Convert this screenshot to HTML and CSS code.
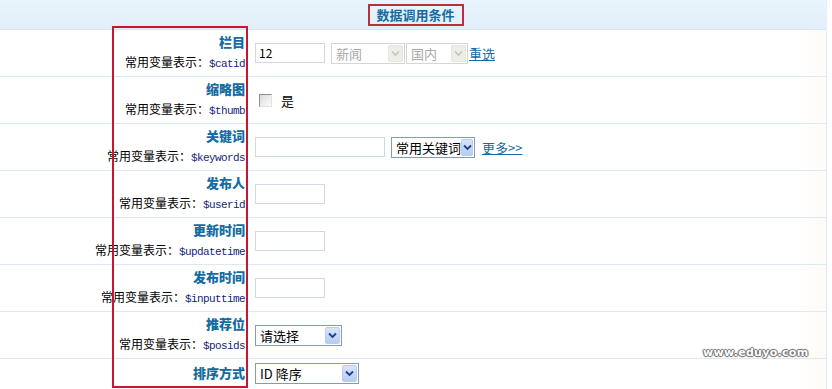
FILE: index.html
```html
<!DOCTYPE html>
<html lang="zh-CN">
<head>
<meta charset="UTF-8">
<title>数据调用条件</title>
<link rel="stylesheet" href="styles.css">
</head>
<body>

<div class="panel">
  <div class="panel-head">
    <span class="head-title">数据调用条件</span>
  </div>

  <div class="row">
    <div class="label"><b>栏目</b><span class="hint">常用变量表示：<code>$catid</code></span></div>
    <div class="value">
      <span class="field w70">12</span>
      <span class="select disabled w74"><span class="txt">新闻</span><span class="arrow"><svg width="9" height="7" viewBox="0 0 9 7"><path d="M1 1.5 L4.5 5 L8 1.5" fill="none" stroke="#c3c3c3" stroke-width="1.6"/></svg></span></span>
      <span class="select disabled w62"><span class="txt">国内</span><span class="arrow"><svg width="9" height="7" viewBox="0 0 9 7"><path d="M1 1.5 L4.5 5 L8 1.5" fill="none" stroke="#c3c3c3" stroke-width="1.6"/></svg></span></span>
      <a href="#" class="link tight">重选</a>
    </div>
  </div>

  <div class="row">
    <div class="label"><b>缩略图</b><span class="hint">常用变量表示：<code>$thumb</code></span></div>
    <div class="value">
      <span class="check"></span><span class="check-text">是</span>
    </div>
  </div>

  <div class="row">
    <div class="label"><b>关键词</b><span class="hint">常用变量表示：<code>$keywords</code></span></div>
    <div class="value">
      <span class="field w130"></span>
      <span class="select w84 gap6"><span class="txt">常用关键词</span><span class="arrow"><svg width="9" height="7" viewBox="0 0 9 7"><path d="M1 1.5 L4.5 5 L8 1.5" fill="none" stroke="#1d3f8c" stroke-width="1.8"/></svg></span></span>
      <a href="#" class="link gap7">更多&gt;&gt;</a>
    </div>
  </div>

  <div class="row">
    <div class="label"><b>发布人</b><span class="hint">常用变量表示：<code>$userid</code></span></div>
    <div class="value"><span class="field w70"></span></div>
  </div>

  <div class="row">
    <div class="label"><b>更新时间</b><span class="hint">常用变量表示：<code>$updatetime</code></span></div>
    <div class="value"><span class="field w70"></span></div>
  </div>

  <div class="row">
    <div class="label"><b>发布时间</b><span class="hint">常用变量表示：<code>$inputtime</code></span></div>
    <div class="value"><span class="field w70"></span></div>
  </div>

  <div class="row">
    <div class="label"><b>推荐位</b><span class="hint">常用变量表示：<code>$posids</code></span></div>
    <div class="value">
      <span class="select w87"><span class="txt">请选择</span><span class="arrow"><svg width="9" height="7" viewBox="0 0 9 7"><path d="M1 1.5 L4.5 5 L8 1.5" fill="none" stroke="#1d3f8c" stroke-width="1.8"/></svg></span></span>
    </div>
  </div>

  <div class="row last">
    <div class="label"><b>排序方式</b></div>
    <div class="value">
      <span class="select w104"><span class="txt">ID 降序</span><span class="arrow"><svg width="9" height="7" viewBox="0 0 9 7"><path d="M1 1.5 L4.5 5 L8 1.5" fill="none" stroke="#1d3f8c" stroke-width="1.8"/></svg></span></span>
    </div>
  </div>

  <div class="mark-box"></div>
  <div class="watermark">www.eduyo.com</div>
</div>

</body>
</html>
```

FILE: styles.css
```css
body, html {
  margin: 0;
  background: #fff;
  font-family: "Noto Sans CJK SC", "Noto Sans", sans-serif;
  font-size: 12px;
  color: #000;
}

.panel {
  position: relative;
  width: 826px;
  height: 389px;
  overflow: hidden;
  border-right: 1px solid #e3eef6;
  background: linear-gradient(to right, #fff 0, #fff 96%, #fdfbf6 100%);
}

.panel-head {
  height: 29px;
  border-bottom: 1px solid #d7e6f0;
  background: linear-gradient(#e9f4fc, #e2eff9);
  display: flex;
  align-items: center;
  justify-content: center;
  padding-left: 6px;
}

.head-title {
  display: inline-block;
  height: 18px;
  line-height: 18px;
  padding: 0 7px 0 6px;
  border: 2px solid #b7303c;
  font-size: 13px;
  font-weight: bold;
  color: #146ca3;
}

.row {
  display: flex;
  align-items: center;
  height: 46px;
  border-bottom: 1px solid #dde9f1;
}

.row.last {
  height: 28px;
  border-bottom: none;
}

.label {
  width: 245px;
  display: flex;
  flex-direction: column;
  align-items: flex-end;
  line-height: 20px;
}

.label b {
  font-size: 13px;
  font-weight: 900;
  color: #146ca3;
}

.hint {
  white-space: nowrap;
}

.hint code {
  font-family: "Liberation Mono", monospace;
  font-size: 11px;
  letter-spacing: -0.6px;
  color: #141f7a;
}

.value {
  display: flex;
  align-items: center;
  padding-left: 10px;
}

.field {
  display: inline-block;
  box-sizing: border-box;
  height: 20px;
  line-height: 18px;
  padding: 0 3px;
  border: 1px solid #cfd9e2;
  background: #fff;
}

.w70 { width: 70px; }
.w130 { width: 130px; }
.w74 { width: 74px; margin-left: 6px; }
.w62 { width: 62px; margin-left: 1px; }
.w84 { width: 84px; }
.w87 { width: 87px; }
.w104 { width: 104px; }
.gap6 { margin-left: 6px; }
.gap7 { margin-left: 7px; }

.select {
  display: inline-flex;
  align-items: center;
  justify-content: space-between;
  box-sizing: border-box;
  height: 21px;
  padding: 1px 1px 1px 4px;
  border: 1px solid #7f9db9;
  background: #fff;
  font-size: 13px;
  white-space: nowrap;
}

.select .arrow {
  display: flex;
  align-items: center;
  justify-content: center;
  width: 15px;
  height: 17px;
  box-sizing: border-box;
  border: 1px solid #b9cdf0;
  border-radius: 2px;
  background: linear-gradient(#d8e5fb, #b7ccf2);
}

.select.disabled {
  border-color: #d6d6ce;
  color: #a9a9a9;
}

.select.disabled .arrow {
  border-color: #e6e6e0;
  background: #eeeee8;
}

.link {
  color: #146ca3;
  text-decoration: underline;
  font-size: 13px;
}

.link.tight {
  margin-left: 1px;
}

.check {
  display: inline-block;
  width: 11px;
  height: 11px;
  margin-left: 4px;
  border: 1px solid #8e8f8f;
  border-right-color: #e2e2e2;
  border-bottom-color: #e2e2e2;
  background: linear-gradient(135deg, #dcdcd7, #fbfbfa);
}

.check-text {
  margin-left: 9px;
  font-size: 13px;
}

.mark-box {
  position: absolute;
  left: 112px;
  top: 26px;
  width: 132px;
  height: 358px;
  border: 2px solid #c8162e;
}

.watermark {
  position: absolute;
  left: 703px;
  top: 346px;
  font-family: "DejaVu Sans", sans-serif;
  font-size: 11px;
  font-weight: bold;
  letter-spacing: 0.3px;
  color: #fff;
  text-shadow: 1px 0 1px #666, -1px 0 1px #666, 0 1px 1px #666, 0 -1px 1px #666;
}
```
